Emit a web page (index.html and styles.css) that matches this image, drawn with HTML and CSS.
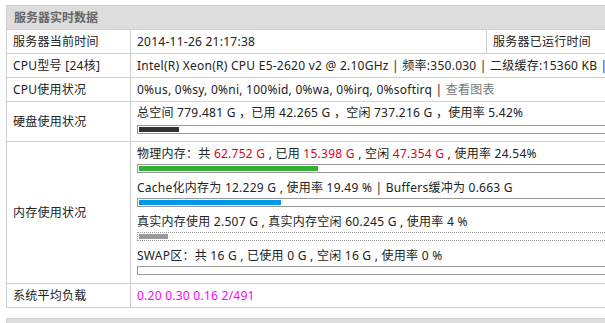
FILE: index.html
```html
<!DOCTYPE html>
<html lang="zh-CN">
<head>
  <meta charset="UTF-8">
  <title>服务器实时数据</title>
  <link rel="stylesheet" href="styles.css">
</head>
<body>
  <div class="panel">
    <div class="panel-title">服务器实时数据</div>
    <table class="info">
      <colgroup>
        <col class="col-label">
        <col class="col-value">
        <col class="col-label2">
        <col>
      </colgroup>
      <tr>
        <td>服务器当前时间</td>
        <td>2014-11-26 21:17:38</td>
        <td>服务器已运行时间</td>
        <td>86天 3小时 12分钟</td>
      </tr>
      <tr>
        <td>CPU型号 [24核]</td>
        <td colspan="3">Intel(R) Xeon(R) CPU E5-2620 v2 @ 2.10GHz | 频率:350.030 | 二级缓存:15360 KB | <span class="extra">Bogomips:4189.95</span></td>
      </tr>
      <tr>
        <td>CPU使用状况</td>
        <td colspan="3">0%us, 0%sy, 0%ni, 100%id, 0%wa, 0%irq, 0%softirq | <a class="muted" href="#">查看图表</a></td>
      </tr>
      <tr class="tall">
        <td>硬盘使用状况</td>
        <td colspan="3" class="block disk">
          <div class="line">总空间 779.481 G ，已用 42.265 G ，空闲 737.216 G ，使用率 5.42%</div>
          <div class="bar"><div class="fill dark" style="width: 5.42%"></div></div>
        </td>
      </tr>
      <tr class="tall">
        <td>内存使用状况</td>
        <td colspan="3" class="block mem">
          <div class="line">物理内存：共 <span class="red">62.752 G</span> , 已用 <span class="red">15.398 G</span> , 空闲 <span class="red">47.354 G</span> , 使用率 24.54%</div>
          <div class="bar"><div class="fill green" style="width: 24.54%"></div></div>
          <div class="line">Cache化内存为 12.229 G , 使用率 19.49 % | Buffers缓冲为 0.663 G</div>
          <div class="bar"><div class="fill blue" style="width: 19.49%"></div></div>
          <div class="line">真实内存使用 2.507 G , 真实内存空闲 60.245 G , 使用率 4 %</div>
          <div class="bar dotted"><div class="fill gray" style="width: 4%"></div></div>
          <div class="line">SWAP区：共 16 G , 已使用 0 G , 空闲 16 G , 使用率 0 %</div>
          <div class="bar"><div class="fill" style="width: 0%"></div></div>
        </td>
      </tr>
      <tr>
        <td>系统平均负载</td>
        <td colspan="3" class="load">0.20 0.30 0.16 2/491</td>
      </tr>
    </table>
  </div>

  <div class="panel">
    <div class="panel-title">网络使用状况</div>
  </div>
</body>
</html>
```

FILE: styles.css
```css
html {
  overflow: hidden;
}

body {
  margin: 5px 0 0 6px;
  background: #fff;
  color: #222;
  font-family: "Noto Sans", "Noto Sans CJK SC", sans-serif;
  font-size: 12px;
  line-height: 14px;
  letter-spacing: 0.25px;
}

.panel {
  width: 872px;
  margin-bottom: 10px;
}

.panel-title {
  height: 23px;
  line-height: 23px;
  padding-left: 7px;
  border: 1px solid #d0d0d0;
  border-bottom: none;
  background: #dddddd;
  color: #666;
  font-weight: bold;
  letter-spacing: 0;
}

.info {
  width: 872px;
  border-collapse: collapse;
  table-layout: fixed;
}

.col-label {
  width: 124px;
}

.col-value {
  width: 356px;
}

.col-label2 {
  width: 120px;
}

.info td {
  height: 23px;
  padding: 0 6px;
  border: 1px solid #d0d0d0;
  white-space: nowrap;
  overflow: hidden;
  vertical-align: middle;
}

.muted {
  color: #777;
  text-decoration: none;
}

.extra {
  color: #c8700a;
}

.red {
  color: #e0001b;
}

.load {
  color: #ff00ff;
}

.info td.block {
  padding-top: 4px;
  padding-bottom: 7px;
}

.info td.mem {
  padding-top: 5px;
  padding-bottom: 8px;
}

.line {
  height: 14px;
}

.disk .bar {
  margin-top: 5px;
}

.mem .bar {
  margin-top: 3px;
  margin-bottom: 8px;
}

.mem .bar:last-child {
  margin-bottom: 0;
}

.bar {
  height: 5px;
  padding: 1px;
  border: 1px solid #999;
}

.bar.dotted {
  border-style: dotted;
}

.fill {
  height: 5px;
}

.dark {
  background: #333;
}

.green {
  background: #33b033;
}

.blue {
  background: #0098ea;
}

.gray {
  background: #999;
}
```
